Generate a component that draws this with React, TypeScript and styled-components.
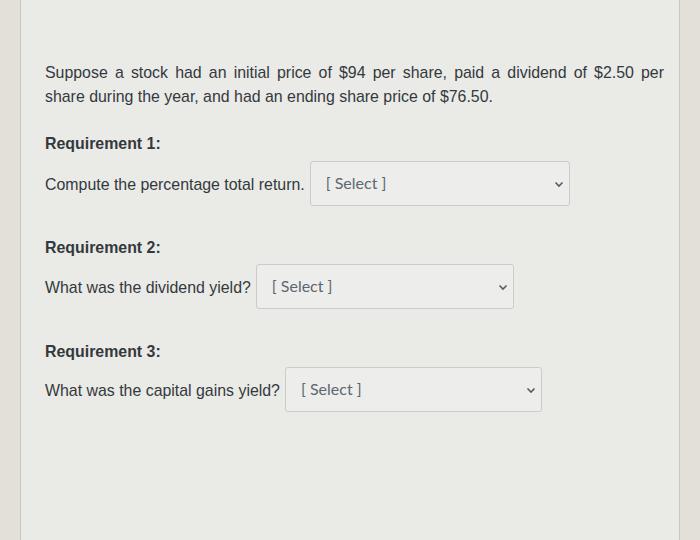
import styled, { createGlobalStyle } from "styled-components";

const GlobalStyle = createGlobalStyle`
  html, body {
    margin: 0;
    padding: 0;
    background: #e2e0d8;
  }
`;

const Page = styled.div`
  width: 700px;
  height: 540px;
  padding: 0 20px;
  box-sizing: border-box;
  background: #e2e0d8;
`;

const Panel = styled.div`
  height: 100%;
  box-sizing: border-box;
  border-left: 1px solid #c9c8c1;
  border-right: 1px solid #c9c8c1;
  background: #eaeae7;
  padding: 61px 15px 0 24px;
  display: flex;
  flex-direction: column;
  font-family: "Liberation Sans", Arial, sans-serif;
  font-size: 15.9px;
  line-height: 24px;
  color: #33393d;
`;

const Question = styled.p`
  margin: 0;
  text-align: justify;
`;

const Heading = styled.div<{ $gap: number }>`
  margin-top: ${({ $gap }) => $gap}px;
  font-weight: bold;
`;

const Row = styled.div<{ $gap: number }>`
  margin-top: ${({ $gap }) => $gap}px;
  display: flex;
  align-items: center;
  gap: 5px;
`;

const Label = styled.span`
  padding-top: 3px;
`;

const Dropdown = styled.div<{ $width: number }>`
  width: ${({ $width }) => $width}px;
  height: 45px;
  box-sizing: border-box;
  border: 1px solid #c9ccca;
  border-radius: 3px;
  background: #ededeb;
  display: flex;
  align-items: center;
  justify-content: space-between;
  padding: 0 5px 2px 15px;
  font-family: Lato, "Liberation Sans", sans-serif;
  font-size: 16px;
  color: #5d6770;
`;

const Chevron = () => (
  <svg width="10" height="7" viewBox="0 0 10 7" style={{ marginTop: 3 }}>
    <path d="M1.5 1.5 L5 5 L8.5 1.5" fill="none" stroke="#555d63" strokeWidth="1.6" />
  </svg>
);

const Select = ({ width }: { width: number }) => (
  <Dropdown $width={width}>
    <span>[ Select ]</span>
    <Chevron />
  </Dropdown>
);

export default function App() {
  return (
    <Page>
      <GlobalStyle />
      <Panel>
        <Question>
          Suppose a stock had an initial price of $94 per share, paid a dividend of $2.50 per
          share during the year, and had an ending share price of $76.50.
        </Question>

        <Heading $gap={23}>Requirement 1:</Heading>
        <Row $gap={5}>
          <Label>Compute the percentage total return.</Label>
          <Select width={260} />
        </Row>

        <Heading $gap={30}>Requirement 2:</Heading>
        <Row $gap={4}>
          <Label>What was the dividend yield?</Label>
          <Select width={258} />
        </Row>

        <Heading $gap={31}>Requirement 3:</Heading>
        <Row $gap={3}>
          <Label>What was the capital gains yield?</Label>
          <Select width={257} />
        </Row>
      </Panel>
    </Page>
  );
}
